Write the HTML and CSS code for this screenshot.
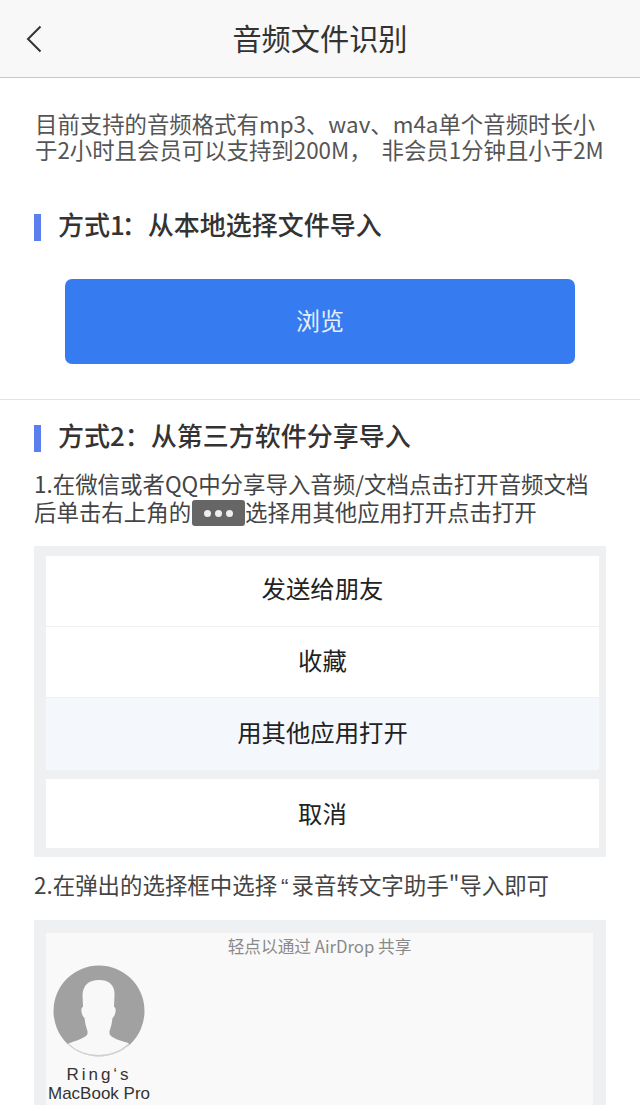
FILE: index.html
```html
<!DOCTYPE html>
<html lang="zh-CN">
<head>
  <meta charset="UTF-8" />
  <meta name="viewport" content="width=device-width, initial-scale=1.0"/>
  <title>音频文件识别</title>
  <link rel="stylesheet" href="styles.css">
</head>
<body>
  <div class="navbar">
    <svg class="back" width="18" height="30" viewBox="0 0 18 30"><path d="M15.5 2.5 3 15l12.500 12.500" fill="none" stroke="#333" stroke-width="2"/></svg>
    <div class="title">音频文件识别</div>
  </div>
  <div class="intro">目前支持的音频格式有mp3、wav、m4a单个音频时长小于2小时且会员可以支持到200M<span class="comma">，</span>非会员1分钟且小于2M</div>
  <div class="section-title first">方式<span class="one">1</span>：从本地选择文件导入</div>
  <div class="button">浏览</div>
  <div class="divider"></div>
  <div class="section-title second">方式2：从第三方软件分享导入</div>
  <div class="step">1.在微信或者QQ中分享导入音频/文档点击打开音频文档<br>后单击右上角的<span class="dots"><i></i><i></i><i></i></span>选择用其他应用打开点击打开</div>
  <div class="sheet">
    <div class="sheet-group">
      <div class="sheet-row row-send">发送给朋友</div>
      <div class="sheet-row row-fav">收藏</div>
      <div class="sheet-row row-open">用其他应用打开</div>
    </div>
    <div class="sheet-row row-cancel">取消</div>
  </div>
  <div class="step step-two">2.在弹出的选择框中选择<span class="quote">“</span>录音转文字助手"导入即可</div>
  <div class="airdrop">
    <div class="airdrop-inner">
      <div class="airdrop-tip">轻点以通过 AirDrop 共享</div>
      <div class="device">
        <svg class="avatar" width="92" height="92" viewBox="0 0 92 92">
          <defs><clipPath id="round"><circle cx="46" cy="46" r="45.5"/></clipPath></defs>
          <circle cx="46" cy="46" r="45.5" fill="#a1a1a1"/>
          <path clip-path="url(#round)" fill="#f8f8f8" d="M46 15C36 15 30 20 29.500 30l.5 12c-2 0-2 4-1 7 .5 2 1.500 3 2.500 4 .5 5 1.500 9 3 13v3c-2 4-10 6-20 10v14h61V78c-10-3-17-5-19-9v-3c1.500-4 2.500-8 3-13 1-1 2-2 2.500-4 1-3 1-7-1-7l.5-12C62 20 56 15 46 15z"/>
          <path clip-path="url(#round)" fill="none" stroke="#cfcfcf" stroke-width="1.500" d="M15 79a45.500 45.500 0 0 0 61 0"/>
        </svg>
        <div class="device-name spaced">Ring‘s</div>
        <div class="device-name">MacBook Pro</div>
      </div>
    </div>
  </div>
</body>
</html>
```
FILE: styles.css
```css
html, body {
  height: 1105px;
  overflow: hidden;
}
body {
  font-family: "Noto Sans CJK SC", "Liberation Sans", sans-serif;
  margin: 0;
  background-color: #fff;
  color: #333;
}
.navbar {
  display: flex;
  align-items: center;
  justify-content: center;
  height: 77px;
  background: #f8f8f8;
  border-bottom: 1px solid #c8c8c8;
  position: relative;
}
.back {
  position: absolute;
  left: 25px;
  top: 24px;
}
.title {
  margin-top: -4px;
  font-size: 29.2px;
  color: #333;
}
.intro {
  margin: 32px 34px 0 35px;
  font-size: 22.4px;
  line-height: 26px;
  color: #555;
}
.comma {
  margin-right: 10px;
}
.section-title {
  margin-left: 34px;
  padding: 0 0 8px 17px;
  border-left: 7px solid #5b7fee;
  font-size: 26px;
  line-height: 19px;
  font-weight: 500;
  color: #333;
}
.one {
  letter-spacing: -3px;
}
.section-title.first {
  margin-top: 52px;
}
.section-title.second {
  margin-top: 25px;
}
.button {
  margin: 38px 65px 0;
  height: 85px;
  line-height: 81px;
  text-align: center;
  background-color: #367bf0;
  border-radius: 7px;
  color: #e6eefc;
  font-size: 24px;
}
.divider {
  margin-top: 35px;
  height: 1px;
  background: #e2e2e2;
}
.step {
  margin: 17px 34px 0;
  font-size: 22.45px;
  line-height: 28px;
  color: #444;
}
.step-two {
  margin-top: 13px;
}
.quote {
  font-family: "Liberation Sans", sans-serif;
  padding: 0 3px 0 4px;
}
.dots {
  display: inline-flex;
  align-items: center;
  justify-content: center;
  gap: 4px;
  width: 53px;
  height: 26px;
  vertical-align: top;
  margin: 3px 0 0 1px;
  background: #666;
  border-radius: 3px;
}
.dots i {
  width: 7px;
  height: 7px;
  border-radius: 50%;
  background: #eee;
}
.sheet {
  margin: 20px 34px 0;
  padding: 10px 7px 9px 12px;
  background: #eff0f2;
}
.sheet-group {
  background: #fff;
}
.sheet-row {
  height: 70px;
  text-align: center;
  background: #fff;
  border-bottom: 1px solid #f0f0f0;
  font-size: 24.4px;
  color: #222;
}
.row-send {
  line-height: 64px;
}
.row-fav {
  line-height: 66px;
}
.row-open {
  height: 72px;
  line-height: 68px;
  background: #f4f8fd;
  border-bottom: 0;
}
.row-cancel {
  margin-top: 9px;
  height: 69px;
  line-height: 68px;
  border-bottom: 0;
}
.airdrop {
  margin: 19px 34px 0;
  padding: 13px 13px 0 12px;
  background: #eff0f2;
}
.airdrop-inner {
  height: 172px;
  background: #f9f9f9;
}
.airdrop-tip {
  text-align: center;
  font-size: 16.7px;
  line-height: 26px;
  color: #8a8a8a;
}
.device {
  width: 106px;
  text-align: center;
}
.avatar {
  display: block;
  margin: 6px 0 0 7px;
}
.device-name {
  font-family: "Liberation Sans", sans-serif;
  font-size: 17px;
  line-height: 20px;
  color: #333;
  white-space: nowrap;
}
.device-name.spaced {
  margin: 8px 0 -1px;
  letter-spacing: 3px;
}
```
